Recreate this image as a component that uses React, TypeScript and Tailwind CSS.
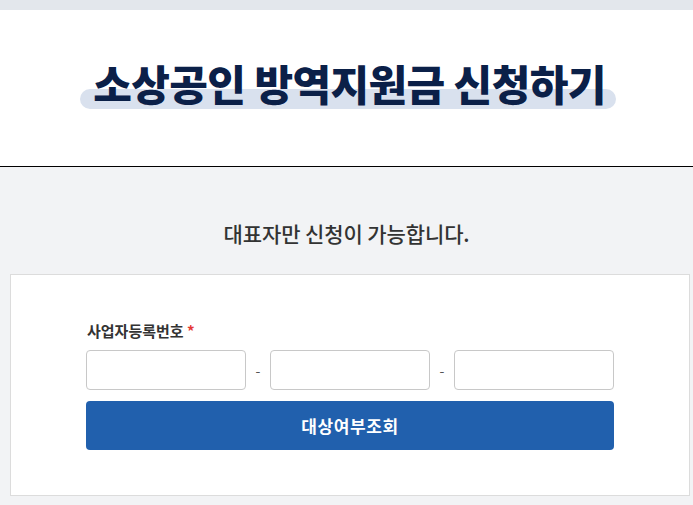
export default function App() {
  return (
    <div className="min-h-screen bg-[#f2f3f5] font-['Noto_Sans_CJK_KR','Noto_Sans',sans-serif]">
      {/* top pattern strip */}
      <div className="h-[10px] bg-[#e3e7ec]" />

      {/* header */}
      <header className="h-[157px] bg-white border-b border-black flex justify-center pt-[47px]">
        <h1 className="relative ml-[6px] inline-block h-[52px] text-[42px] leading-[52px] font-black tracking-[-0.6px] text-[#0b2048]">
          <span className="absolute left-[-13px] right-[-10px] top-[32px] h-[20px] rounded-full bg-[#d9e1ee]" />
          <span className="relative">소상공인 방역지원금 신청하기</span>
        </h1>
      </header>

      <p className="pt-[52px] text-center text-[21px] leading-[28px] font-medium tracking-[-0.1px] text-[#333333]">
        대표자만 신청이 가능합니다.
      </p>

      {/* form card */}
      <div className="mt-[27px] ml-[10px] mr-[3px] border border-[#dcdcdc] bg-white pt-[46px] pb-[45px]">
        <div className="w-[528px] mx-auto">
          <label className="block pl-[1px] text-[15px] leading-[20px] font-bold text-[#333333]">
            사업자등록번호 <span className="text-[#e53935]">*</span>
          </label>
          <div className="mt-[9px] flex items-center">
            <input className="flex-1 min-w-0 h-[40px] rounded-[4px] border border-[#c8c8c8] bg-white px-2 outline-none" />
            <span className="w-[24px] text-center text-[14px] text-[#555555]">-</span>
            <input className="flex-1 min-w-0 h-[40px] rounded-[4px] border border-[#c8c8c8] bg-white px-2 outline-none" />
            <span className="w-[24px] text-center text-[14px] text-[#555555]">-</span>
            <input className="flex-1 min-w-0 h-[40px] rounded-[4px] border border-[#c8c8c8] bg-white px-2 outline-none" />
          </div>
          <button className="mt-[11px] w-full h-[49px] rounded-[4px] bg-[#2160ad] text-white text-[17px] font-bold tracking-[0.6px]">
            대상여부조회
          </button>
        </div>
      </div>
    </div>
  );
}
